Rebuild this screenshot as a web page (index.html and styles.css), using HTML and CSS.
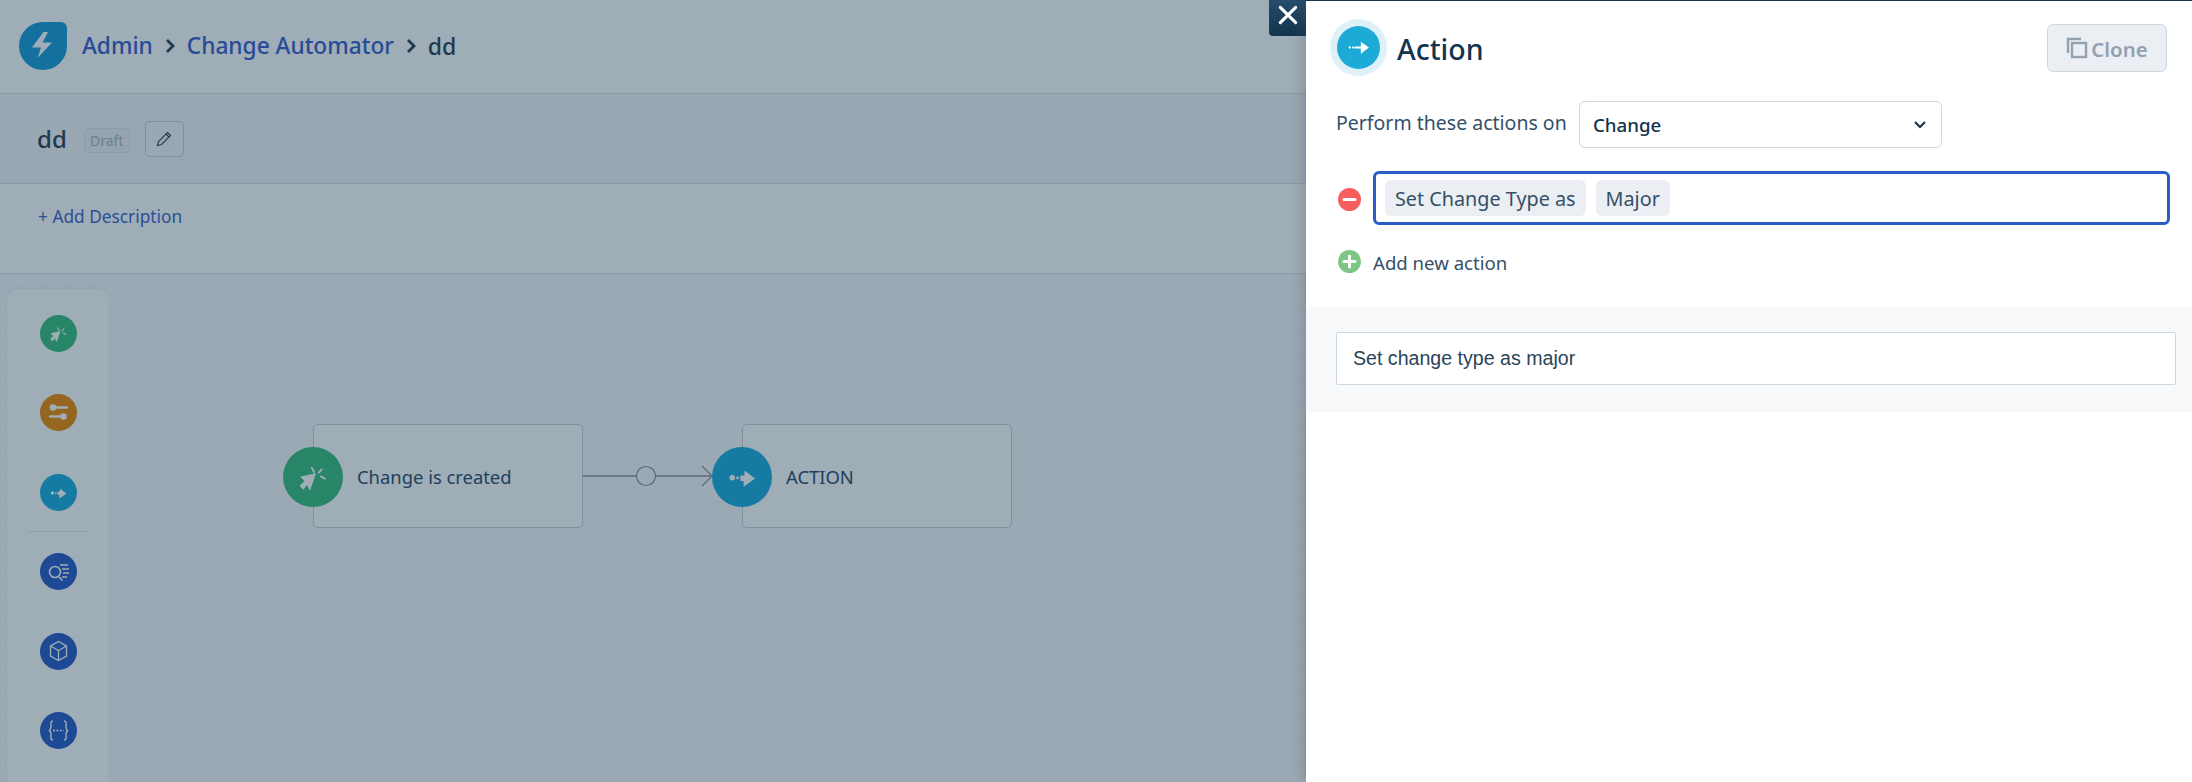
FILE: index.html
```html
<!DOCTYPE html>
<html lang="en">
<head>
<meta charset="utf-8">
<title>Change Automator</title>
<link rel="stylesheet" href="styles.css">
</head>
<body>
<div class="page">
  <main class="backdrop">
    <header class="crumbs">
      <svg class="logo" width="48" height="48" viewBox="0 0 48 48"><path d="M24 0H42a6 6 0 0 1 6 6V24A24 24 0 1 1 24 0Z" fill="#13709f"/><path d="M25.500 11 14 26.500h9L19.500 37 34 21.500H24.500L30 11Z" fill="#9fadb7" transform="translate(-1 -1)"/></svg>
      <a class="crumb">Admin</a>
      <svg class="chev" width="10" height="16" viewBox="0 0 10 16"><path d="M2 2l6 6-6 6" fill="none" stroke="#1f3a4f" stroke-width="2.800"/></svg>
      <a class="crumb">Change Automator</a>
      <svg class="chev" width="10" height="16" viewBox="0 0 10 16"><path d="M2 2l6 6-6 6" fill="none" stroke="#1f3a4f" stroke-width="2.800"/></svg>
      <span class="crumb-current">dd</span>
    </header>
    <section class="titlebar">
      <h1 class="title">dd</h1>
      <span class="badge">Draft</span>
      <button class="edit" type="button"><svg width="16" height="16" viewBox="0 0 16 16"><path d="M11.500 1.500l3 3L5.500 13.500l-4 1 1-4ZM10 3l3 3" fill="none" stroke="#1f3a4f" stroke-width="1.100"/></svg></button>
    </section>
    <section class="descbar"><a class="add-desc">+ Add Description</a></section>
    <section class="canvas">
      <aside class="palette">
        <div class="tool green"><svg width="37" height="37" viewBox="0 0 37 37"><use href="#i-click"/></svg></div>
        <div class="tool orange"><svg width="37" height="37" viewBox="0 0 37 37"><path d="M17 13.500h10M10 22.500h10" stroke="#9fadb7" stroke-width="2.400" stroke-linecap="round"/><circle cx="13" cy="13.500" r="3.300" fill="#9fadb7"/><circle cx="23.500" cy="22.500" r="3.300" fill="#9fadb7"/></svg></div>
        <div class="tool teal"><svg width="37" height="37" viewBox="0 0 37 37"><use href="#i-arrow"/></svg></div>
        <hr class="sep">
        <div class="tool blue"><svg width="37" height="37" viewBox="0 0 37 37"><circle cx="15" cy="19" r="5.500" fill="none" stroke="#9fadb7" stroke-width="1.600"/><path d="M19 24l3.500 3.500M20 12h8M22 16h7M23 20h6M22 24h5" stroke="#9fadb7" stroke-width="1.600" fill="none"/></svg></div>
        <div class="tool blue"><svg width="37" height="37" viewBox="0 0 37 37"><path d="M18.500 8.500l8 4.500v10l-8 4.500-8-4.500V13ZM10.500 13l8 4.500 8-4.500M18.500 17.500v10" fill="none" stroke="#9fadb7" stroke-width="1.300"/></svg></div>
        <div class="tool blue"><svg width="37" height="37" viewBox="0 0 37 37"><path d="M13 9c-3 0-2 3-2 5s0 4-2 4.500c2 .5 2 2.500 2 4.500s-1 5 2 5M24 9c3 0 2 3 2 5s0 4 2 4.500c-2 .5-2 2.500-2 4.500s1 5-2 5" fill="none" stroke="#9fadb7" stroke-width="1.400"/><path d="M13 18.500h11" stroke="#9fadb7" stroke-width="1.400" stroke-dasharray="2 1.500"/></svg></div>
      </aside>
      <div class="node node-trigger">
        <div class="node-icon green"><svg width="60" height="60" viewBox="0 0 37 37"><use href="#i-click"/></svg></div>
        <span class="node-label">Change is created</span>
      </div>
      <svg class="connector" width="160" height="24" viewBox="0 0 160 24"><path d="M0 12h53M73 12h86" stroke="#5d6b78" stroke-width="1.500" fill="none"/><circle cx="63" cy="12" r="9.500" fill="none" stroke="#5d6b78" stroke-width="1.200"/><path d="M119 2l10 10-10 10" fill="none" stroke="#5d6b78" stroke-width="1.200"/></svg>
      <div class="node node-action">
        <div class="node-icon teal"><svg width="60" height="60" viewBox="0 0 37 37"><use href="#i-arrow"/></svg></div>
        <span class="node-label">ACTION</span>
      </div>
    </section>
    <button class="close" type="button"><svg width="22" height="22" viewBox="0 0 20 20"><path d="M3 3l14 14M17 3L3 17" stroke="#fff" stroke-width="2.800" stroke-linecap="round"/></svg></button>
  </main>
  <aside class="panel">
    <div class="panel-head">
      <div class="head-left">
        <div class="halo"><div class="halo-inner"><svg width="43" height="43" viewBox="0 0 37 37"><use href="#i-arrow-white"/></svg></div></div>
        <h2 class="panel-title">Action</h2>
      </div>
      <button class="clone" type="button"><svg width="22" height="22" viewBox="0 0 22 22"><path d="M2 16V2h13" fill="none" stroke="#92a2b1" stroke-width="2.400"/><rect x="6" y="6" width="14" height="14" fill="none" stroke="#92a2b1" stroke-width="2.400"/></svg><span class="clone-text">Clone</span></button>
    </div>
    <div class="perform">
      <label class="perform-label">Perform these actions on</label>
      <div class="select"><span>Change</span><svg width="14" height="10" viewBox="0 0 14 10"><path d="M2 2l5 5 5-5" fill="none" stroke="#12344d" stroke-width="2"/></svg></div>
    </div>
    <div class="action-row">
      <svg class="round minus" width="23" height="23" viewBox="0 0 23 23"><circle cx="11.500" cy="11.500" r="11.500" fill="#f75f5f"/><path d="M6 11.500h11" stroke="#fff" stroke-width="3" stroke-linecap="round"/></svg>
      <div class="tokens"><span class="chip">Set Change Type as</span><span class="chip">Major</span></div>
    </div>
    <div class="add-row">
      <svg class="round" width="23" height="23" viewBox="0 0 23 23"><circle cx="11.500" cy="11.500" r="11.500" fill="#7bc587"/><path d="M6 11.500h11M11.500 6v11" stroke="#fff" stroke-width="3" stroke-linecap="round"/></svg>
      <span class="add-text">Add new action</span>
    </div>
    <div class="note-band"><input class="note" type="text" value="Set change type as major"></div>
  </aside>
</div>
<svg class="defs" width="0" height="0">
  <defs>
    <g id="i-click"><path d="M11 18.500L20 16.500 16.500 26.500 15 22.800 12.500 26 10.500 24 13.500 21Z" fill="#9fadb7" stroke="#9fadb7" stroke-width=".6" stroke-linejoin="round"/><path d="M17.700 12.800l1.400 2.600M23.900 13.800l-1.900 2M25.900 19.500l-2.600-1.400" stroke="#9fadb7" stroke-width="1.100" stroke-linecap="round"/></g>
    <g id="i-arrow"><circle cx="12.500" cy="19" r="1.700" fill="#9fadb7"/><rect x="15" y="18.300" width="1.500" height="1.500" fill="#9fadb7"/><path d="M17.500 17.500H20V14.500L26.500 19.500 19.500 24.500V21H17.500Z" fill="#9fadb7"/></g>
    <g id="i-arrow-white"><circle cx="11" cy="18.500" r="1" fill="#fff"/><rect x="13" y="17.700" width="2" height="1.600" fill="#fff"/><path d="M15.500 17.600H20.500V13.500L27.500 18.500 20.500 23.800V19.400H15.500Z" fill="#fff"/></g>
  </defs>
</svg>
</body>
</html>
```
FILE: styles.css
```css
* { box-sizing: border-box; }
html, body { margin: 0; padding: 0; height: 100%; overflow: hidden; }
body { font-family: "Noto Sans", sans-serif; color: #12344d; background: #9fadb7; }
.defs { position: absolute; }
.page { display: flex; height: 782px; width: 2192px; }

.backdrop { position: relative; width: 1306px; flex: none; display: flex; flex-direction: column; background: #9fadb7; }
.crumbs { height: 94px; flex: none; display: flex; align-items: center; padding: 0 0 0 19px; border-bottom: 1px solid #8998a6; }
.logo { flex: none; margin: -2px 15px 0 0; }
.crumb { font-size: 22.700px; font-weight: 500; color: #274b96; margin-top: -2px; }
.chev { flex: none; margin: -2px 12px 0 12px; }
.crumb-current { font-size: 23px; font-weight: 500; color: #1f3a4f; margin-top: -2px; }

.titlebar { height: 90px; flex: none; display: flex; align-items: center; padding: 0 0 0 37px; background: #99a7b3; border-bottom: 1px solid #8998a6; }
.title { margin: 0; font-size: 24px; font-weight: 500; color: #1f3a4f; line-height: 32px; }
.badge { margin: 4px 0 0 17px; width: 46px; height: 25px; display: flex; align-items: center; justify-content: center; font-size: 14px; color: #6f7f8c; background: #95a4b0; border: 1px solid #8d9ca9; border-radius: 5px; }
.edit { margin: 0 0 0 15px; width: 39px; height: 36px; display: flex; align-items: center; justify-content: center; padding: 0; background: #9aa8b4; border: 1px solid #7f8f9e; border-radius: 5px; }

.descbar { height: 90px; flex: none; padding: 19px 0 0 38px; border-bottom: 1px solid #8998a6; }
.add-desc { font-size: 17.300px; line-height: 28px; color: #2c4e96; display: block; }

.canvas { position: relative; flex: 1; padding: 15px 0 0 7px; background-color: #9ba9b5; background-image: radial-gradient(circle, #97a5b1 1.500px, transparent 2px); background-size: 24px 24px; background-position: 11px 0; overflow: hidden; }
.palette { width: 102px; height: 520px; padding: 25.500px 0 0; display: flex; flex-direction: column; align-items: center; gap: 42.500px; background: #9fadb7; border-radius: 12px; box-shadow: 0 0 3px #93a1ad; }
.tool { width: 37px; height: 37px; flex: none; border-radius: 50%; }
.tool svg { display: block; }
.sep { width: 61px; margin: -21.750px 0; border: 0; border-top: 1px solid #93a1ac; height: 0; flex: none; }
.green { background: #288568; }
.orange { background: #95661f; }
.teal { background: #167ba2; }
.blue { background: #1e4a95; }

.node { position: absolute; top: 150px; width: 270px; height: 104px; display: flex; align-items: center; padding-left: 43px; background: #9fadb7; border: 1px solid #7f8f9e; border-radius: 5px; }
.node-trigger { left: 313px; }
.node-action { left: 742px; }
.node-icon { position: absolute; left: -31px; top: 22px; width: 60px; height: 60px; border-radius: 50%; }
.node-icon svg { display: block; }
.node-label { font-size: 18.400px; color: #21405c; }
.connector { position: absolute; left: 583px; top: 190px; }

.close { position: absolute; left: 1269px; top: 0; width: 37px; height: 36px; display: flex; align-items: center; justify-content: center; padding: 0 0 6px; border: 0; border-bottom-left-radius: 4px; background: linear-gradient(#264d6c, #12344d); }

.panel { width: 886px; flex: none; background: #fff; border-top: 1px solid #12344d; box-shadow: -4px 0 10px rgba(60,75,90,.25); position: relative; }
.panel-head { height: 90px; display: flex; align-items: center; justify-content: space-between; padding: 0 25px 0 24px; }
.head-left { display: flex; align-items: center; }
.halo { width: 57px; height: 57px; padding: 7px; border-radius: 50%; background: #dff1f8; margin-top: 2px; }
.halo-inner { width: 43px; height: 43px; border-radius: 50%; background: #1cabd6; }
.halo-inner svg { display: block; }
.panel-title { margin: 5px 0 0 10px; font-size: 28.500px; font-weight: 500; color: #12344d; }
.clone { width: 120px; height: 48px; margin-top: 4px; display: flex; align-items: center; justify-content: center; gap: 3px; padding: 0; background: #ebeff3; border: 1px solid #cfd7df; border-radius: 6px; font: 600 20.400px "Noto Sans", sans-serif; color: #92a2b1; }
.clone-text { margin-top: 2px; }

.perform { display: flex; align-items: center; padding: 10px 0 0 30px; height: 57px; }
.perform-label { font-size: 19.500px; color: #345068; width: 243px; margin-top: -4px; }
.select { width: 363px; height: 47px; display: flex; align-items: center; justify-content: space-between; padding: 0 14px 0 13px; border: 1px solid #cfd7df; border-radius: 6px; font-size: 18.700px; font-weight: 500; color: #12344d; }

.action-row { display: flex; align-items: center; gap: 12px; padding: 23px 0 0 32px; }
.round { flex: none; display: block; }
.minus { margin-top: 3px; }
.tokens { width: 797px; height: 54px; display: flex; align-items: center; gap: 10px; padding: 0 9px; border: 3px solid #2c5cc5; border-radius: 6px; }
.chip { height: 36px; display: flex; align-items: center; padding: 0 10px; background: #ebeff3; border-radius: 6px; font-size: 19.800px; color: #345068; }

.add-row { display: flex; align-items: center; gap: 12px; padding: 22px 0 0 32px; }
.add-text { font-size: 18.600px; color: #345068; margin-top: 3px; }

.note-band { margin-top: 32px; height: 105px; padding: 25px 16px 0 30px; background: #f8f9fa; }
.note { width: 840px; height: 53px; padding: 0 16px; background: #fff; border: 1px solid #cfd7df; border-radius: 2px; font: 19.600px "Liberation Sans", Arial, sans-serif; color: #2a4459; outline: 0; }
```
